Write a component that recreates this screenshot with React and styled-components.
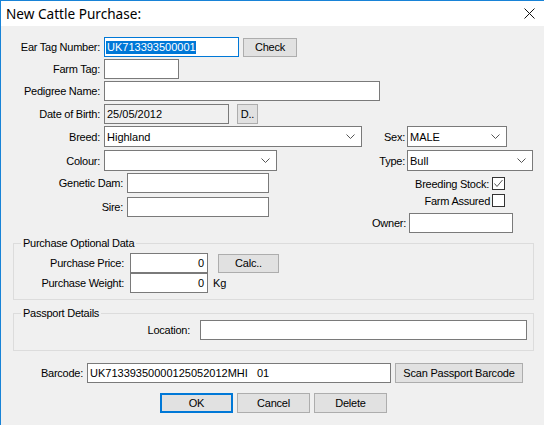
import styled, { createGlobalStyle } from "styled-components";

const GlobalStyle = createGlobalStyle`
	html, body {
		margin: 0;
		padding: 0;
		background: #f0f0f0;
		overflow: hidden;
	}
	body {
		font-family: "Liberation Sans", Arial, sans-serif;
		font-size: 11px;
		color: #000;
	}
`;

const Chevron = () => (
	<svg width='9' height='5' viewBox='0 0 9 5'>
		<polyline points='0.5,0.5 4.5,4.5 8.5,0.5' fill='none' stroke='#555' strokeWidth='1' />
	</svg>
);

const Tick = () => (
	<svg width='11' height='11' viewBox='0 0 11 11'>
		<polyline points='1.5,5.5 4,8.5 9.5,2' fill='none' stroke='#555' strokeWidth='1' />
	</svg>
);

const Field = ({ w, h, value, right, readOnly, focused, selected }) => (
	<Box w={w} h={h} right={right} readOnly={readOnly} focused={focused}>
		{selected ? <Selection>{value}</Selection> : value}
	</Box>
);

const Select = ({ w, value }) => (
	<SelectBox w={w}>
		<span>{value}</span>
		<Chevron />
	</SelectBox>
);

const App = () => {
	return (
		<>
			<GlobalStyle />
			<Window>
				<TitleBar>
					<Title>New Cattle Purchase:</Title>
					<svg width='11' height='11' viewBox='0 0 11 11'>
						<path d='M0.5 0.5 L10.5 10.5 M10.5 0.5 L0.5 10.5' stroke='#111' strokeWidth='1' />
					</svg>
				</TitleBar>

				<Body>
					<Row h={20}>
						<Label w={99}>Ear Tag Number:</Label>
						<Field w={135} value='UK713393500001' focused selected />
						<Button w={54} h={19} ml={4}>Check</Button>
					</Row>
					<Row h={20} mt={2}>
						<Label w={99}>Farm Tag:</Label>
						<Field w={75} />
					</Row>
					<Row h={20} mt={2}>
						<Label w={99}>Pedigree Name:</Label>
						<Field w={276} />
					</Row>
					<Row h={20} mt={3}>
						<Label w={99}>Date of Birth:</Label>
						<Field w={125} value='25/05/2012' readOnly />
						<Button w={21} h={20} ml={8}>D..</Button>
					</Row>

					<Middle>
						<LeftCol>
							<Row h={21}>
								<Label w={99}>Breed:</Label>
								<Select w={258} value='Highland' />
							</Row>
							<Row h={21} mt={3}>
								<Label w={99}>Colour:</Label>
								<Select w={173} value='' />
							</Row>
							<Row h={20} mt={2}>
								<Label w={122}>Genetic Dam:</Label>
								<Field w={142} />
							</Row>
							<Row h={20} mt={4}>
								<Label w={122}>Sire:</Label>
								<Field w={142} />
							</Row>
						</LeftCol>

						<RightCol>
							<Row h={21}>
								<Label w={39} gap={2}>Sex:</Label>
								<Select w={100} value='MALE' />
							</Row>
							<Row h={21} mt={3}>
								<Label w={39} gap={2}>Type:</Label>
								<Select w={126} value='Bull' />
							</Row>
							<Row h={13} mt={6}>
								<Label w={123} gap={3}>Breeding Stock:</Label>
								<CheckBox>
									<Tick />
								</CheckBox>
							</Row>
							<Row h={13} mt={4}>
								<Label w={124} gap={2}>Farm Assured</Label>
								<CheckBox />
							</Row>
							<Row h={20} mt={6}>
								<Label w={40} gap={3}>Owner:</Label>
								<Field w={104} />
							</Row>
						</RightCol>
					</Middle>

					<Group mt={3} pt={3} pb={6}>
						<Legend>Purchase Optional Data</Legend>
						<Row h={20}>
							<Label w={110} gap={6}>Purchase Price:</Label>
							<Field w={78} value='0' right />
							<Button w={61} h={19} ml={10}>Calc..</Button>
						</Row>
						<Row h={20}>
							<Label w={110} gap={6}>Purchase Weight:</Label>
							<Field w={78} value='0' right />
							<Unit>Kg</Unit>
						</Row>
					</Group>

					<Group mt={6} pt={0} pb={10}>
						<Legend>Passport Details</Legend>
						<Row h={20}>
							<Label w={176} gap={10}>Location:</Label>
							<Field w={327} />
						</Row>
					</Group>

					<Row h={20} mt={12}>
						<Label w={82} gap={4}>Barcode:</Label>
						<Field w={304} value='UK71339350000125052012MHI   01' />
						<Button w={128} h={20} ml={4}>Scan Passport Barcode</Button>
					</Row>

					<Actions>
						<Button w={73} h={20} primary>OK</Button>
						<Button w={73} h={20}>Cancel</Button>
						<Button w={73} h={20}>Delete</Button>
					</Actions>
				</Body>
			</Window>
		</>
	);
};

export default App;

const Window = styled.div`
	width: 544px;
	height: 425px;
	box-sizing: border-box;
	border-left: 1px solid #1883d7;
	border-top: 1px solid #1883d7;
	background: #f0f0f0;
	display: flex;
	flex-direction: column;
`;

const TitleBar = styled.div`
	height: 25px;
	background: #fff;
	display: flex;
	align-items: center;
	justify-content: space-between;
	padding: 0 9px 0 5px;
	flex-shrink: 0;
`;

const Title = styled.span`
	font-family: "Noto Sans", "Open Sans", sans-serif;
	font-size: 13.6px;
	color: #000;
`;

const Body = styled.div`
	display: flex;
	flex-direction: column;
	padding-top: 11px;
`;

const Row = styled.div`
	display: flex;
	align-items: center;
	height: ${(p) => p.h}px;
	margin-top: ${(p) => p.mt || 0}px;
`;

const Label = styled.span`
	width: ${(p) => p.w}px;
	margin-right: ${(p) => (p.gap === undefined ? 4 : p.gap)}px;
	text-align: right;
	white-space: nowrap;
	letter-spacing: -0.25px;
	flex-shrink: 0;
`;

const Box = styled.div`
	width: ${(p) => p.w}px;
	height: ${(p) => p.h || 20}px;
	box-sizing: border-box;
	border: 1px solid ${(p) => (p.focused ? "#0078d7" : "#7a7a7a")};
	background: ${(p) => (p.readOnly ? "#f0f0f0" : "#fff")};
	display: flex;
	align-items: center;
	justify-content: ${(p) => (p.right ? "flex-end" : "flex-start")};
	padding: ${(p) => (p.right ? "0 3px 0 0" : "0 0 0 2px")};
	padding-left: ${(p) => (p.focused ? 1 : p.right ? 0 : 2)}px;
	white-space: pre;
	flex-shrink: 0;
`;

const Selection = styled.span`
	background: #0078d7;
	color: #fff;
	line-height: 13px;
	padding-left: 1px;
`;

const SelectBox = styled.div`
	width: ${(p) => p.w}px;
	height: 21px;
	box-sizing: border-box;
	border: 1px solid #7a7a7a;
	background: #fff;
	display: flex;
	align-items: center;
	justify-content: space-between;
	padding: 0 6px 0 2px;
	flex-shrink: 0;
`;

const Button = styled.div`
	width: ${(p) => p.w}px;
	height: ${(p) => p.h}px;
	margin-left: ${(p) => p.ml || 0}px;
	box-sizing: border-box;
	background: #e1e1e1;
	border: ${(p) => (p.primary ? "2px solid #0078d7" : "1px solid #adadad")};
	display: flex;
	align-items: center;
	justify-content: center;
	white-space: nowrap;
	letter-spacing: -0.2px;
	flex-shrink: 0;
`;

const Middle = styled.div`
	display: flex;
	margin-top: 2px;
`;

const LeftCol = styled.div`
	width: 365px;
	display: flex;
	flex-direction: column;
`;

const RightCol = styled.div`
	display: flex;
	flex-direction: column;
`;

const CheckBox = styled.div`
	width: 13px;
	height: 13px;
	box-sizing: border-box;
	border: 1px solid #333;
	background: #fff;
	display: flex;
	align-items: center;
	justify-content: center;
`;

const Group = styled.fieldset`
	margin: ${(p) => p.mt}px 10px 0 12px;
	padding: ${(p) => p.pt}px 0 ${(p) => p.pb}px 0;
	border: 1px solid #dcdcdc;
	min-width: 0;
	display: flex;
	flex-direction: column;
`;

const Legend = styled.legend`
	margin-left: 7px;
	padding: 0 2px;
	line-height: 14px;
	letter-spacing: -0.25px;
`;

const Unit = styled.span`
	margin-left: 5px;
`;

const Actions = styled.div`
	display: flex;
	gap: 4px;
	margin-top: 10px;
	padding-left: 159px;
`;
